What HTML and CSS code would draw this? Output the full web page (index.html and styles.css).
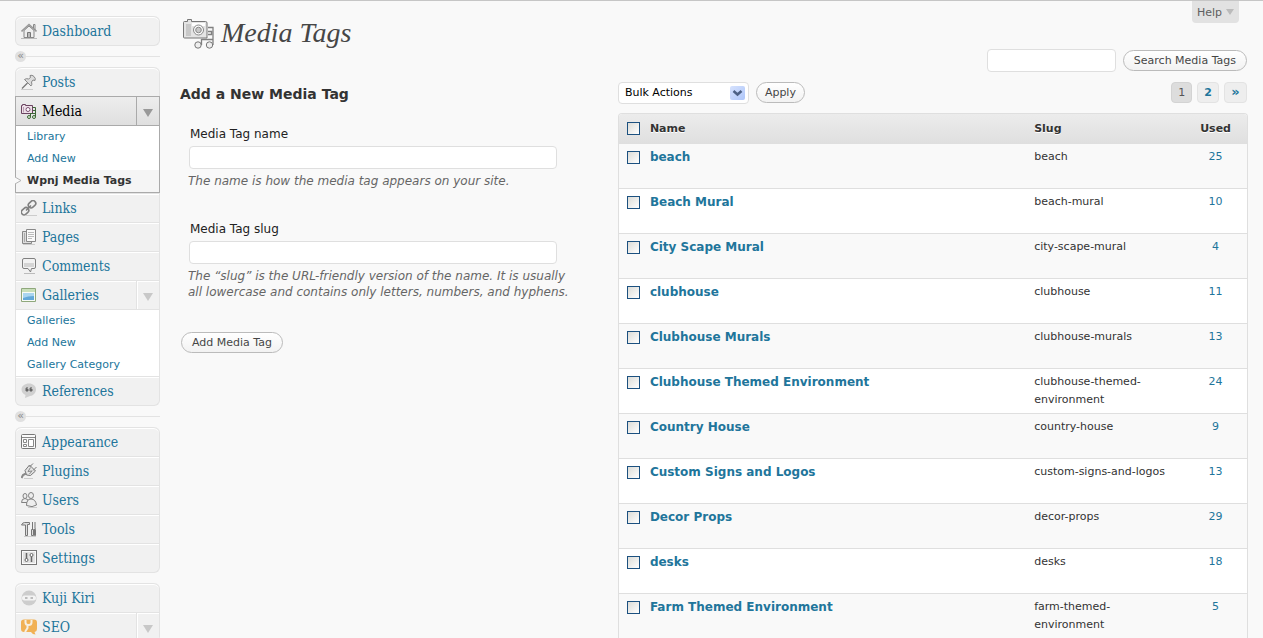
FILE: index.html
```html
<!DOCTYPE html>
<html lang="en">
<head>
<meta charset="utf-8">
<title>Media Tags</title>
<link rel="stylesheet" href="styles.css">
</head>
<body>
<div class="page">
  <nav class="sidebar" aria-label="Main menu">
    <ul class="group">
      <li><a class="item" href="#"><svg class="icon" viewBox="0 0 16 16"><path d="M3 7.500v7h10v-7L8 3z" fill="#eee" stroke="#888"/><path d="M.5 8.500 8 1.500l7.500 7" fill="none" stroke="#999" stroke-width="1.600"/><path d="M12.500 5V1.500h1.500V7" fill="none" stroke="#888"/><path d="M6.500 14V9.500h3V14" fill="#bbb" stroke="#777"/><path d="M0 15.500h16" stroke="#bbb"/></svg><span>Dashboard</span></a></li>
    </ul>
    <div class="sep"><span>«</span></div>
    <ul class="group">
      <li><a class="item" href="#"><svg class="icon" viewBox="0 0 16 16"><path d="M9 1.500q2-1 4 1t1 4l-2-.5-1.500 2q1 2.500-.5 4L3.500 5.500q2-1.500 4-.5l2-1.500z" fill="#dcdcdc" stroke="#888"/><path d="M6.500 9 1 14.500" stroke="#777" stroke-width="1.300" fill="none"/><path d="M0 15.500h12" stroke="#ccc"/></svg><span>Posts</span></a></li>
      <li>
        <div class="split current"><a class="item" href="#"><svg class="icon" viewBox="0 0 16 16"><path d="M.5 2.500h1v-1h3v1h7v8H.5z" fill="#eddfe8" stroke="#6b4461"/><path d="M2.500 4v5.500" stroke="#b89fb1"/><circle cx="7" cy="6.500" r="2" fill="#fff" stroke="#7b4f70"/><path d="M9.500 14v-4M14.500 14V4.500h-3M12 7.500h2.500M9.500 10.500h5" fill="none" stroke="#3d6636"/><circle cx="8" cy="14" r="1.500" fill="#dff0d8" stroke="#3d6636"/><circle cx="13" cy="14" r="1.500" fill="#dff0d8" stroke="#3d6636"/></svg><span>Media</span></a><button class="toggle" type="button" aria-label="Toggle Media"></button></div>
        <ul class="sub sub-current">
          <li><a href="#">Library</a></li>
          <li><a href="#">Add New</a></li>
          <li class="active"><svg class="notch" viewBox="0 0 8 12"><path d="M0 2 6 5.500 0 9" fill="#f9f9f9" stroke="#b4b4b4"/></svg><a href="#">Wpnj Media Tags</a></li>
        </ul>
      </li>
      <li><a class="item" href="#"><svg class="icon" viewBox="0 0 16 16"><g fill="none" stroke="#808080" stroke-width="1.600"><rect x="7" y="1.500" width="8" height="5.500" rx="2.700" transform="rotate(-42 11 4.200)"/><rect x="0" y="8.500" width="8" height="5.500" rx="2.700" transform="rotate(-42 4 11.200)"/><path d="M5 10.500 10 5.500"/></g><path d="M4 15.500h13" stroke="#ccc"/></svg><span>Links</span></a></li>
      <li><a class="item" href="#"><svg class="icon" viewBox="0 0 16 16"><path d="M1.500 2.500h9v12h-9z" fill="#ddd" stroke="#888"/><path d="M3.500 4v9" stroke="#aaa"/><path d="M5.500 .5h9v12h-9z" fill="#fafafa" stroke="#888"/><path d="M7 3.500h6M7 5.500h6M7 7.500h6M7 9.500h4" stroke="#bbb"/><path d="M2 15.500h12" stroke="#ccc"/></svg><span>Pages</span></a></li>
      <li><a class="item" href="#"><svg class="icon" viewBox="0 0 16 16"><path d="M3 .5h10q1.500 0 1.500 1.500v7q0 1.500-1.500 1.500h-2.500L9.500 14l-2.500-3.500H3Q1.500 10.500 1.500 9V2Q1.500 .5 3 .5z" fill="#f2f2f2" stroke="#808080"/><path d="M3 5h10v4H3z" fill="#d4d4d4"/><path d="M3 15.500h11" stroke="#bbb"/></svg><span>Comments</span></a></li>
      <li>
        <div class="split"><a class="item" href="#"><svg class="icon" viewBox="0 0 16 16"><path d="M.5 1.500h14v13H.5z" fill="#f8fbf6" stroke="#8fa87c"/><path d="M1 2h13v3H1z" fill="#c9dfba"/><path d="M2 6h11v7H2z" fill="#a9d5f0"/><path d="M2 11q5-2 11-2v4H2z" fill="#62a8d9"/></svg><span>Galleries</span></a><button class="toggle" type="button" aria-label="Toggle Galleries"></button></div>
        <ul class="sub">
          <li><a href="#">Galleries</a></li>
          <li><a href="#">Add New</a></li>
          <li><a href="#">Gallery Category</a></li>
        </ul>
      </li>
      <li><a class="item" href="#"><svg class="icon" viewBox="0 0 16 16"><path d="M8 .5c4 0 7 2.500 7 6s-3 6.500-6 6.500l-5 2 .5-3C2 11 .5 9 .5 6.500c0-3.500 3.500-6 7.500-6z" fill="#d0d0d0"/><path d="M6.500 4 5 5.500V8h2V6H6M10.500 4 9 5.500V8h2V6h-1" stroke="#666" fill="#666"/></svg><span>References</span></a></li>
    </ul>
    <div class="sep"><span>«</span></div>
    <ul class="group">
      <li><a class="item" href="#"><svg class="icon" viewBox="0 0 16 16"><rect x=".5" y=".5" width="14" height="14" rx="1" fill="#fafafa" stroke="#777"/><path d="M1 3.500h13" stroke="#888"/><path d="M2.500 5.500h3v3h-3zM2.500 10.500h3v2h-3zM7.500 5.500h5v7h-5z" fill="#fff" stroke="#888"/></svg><span>Appearance</span></a></li>
      <li><a class="item" href="#"><svg class="icon" viewBox="0 0 16 16"><path d="M4 7.500 8.500 2l6 6-5 4.500-4-.5zM8.500 4 12 .5M12 7.500 15.500 4" fill="#e4e4e4" stroke="#777"/><path d="M9.500 4.500 7 8.500l4-.5-2.500 3" fill="none" stroke="#888"/><path d="M5 10.500 2 12l-1.500 3" fill="none" stroke="#888" stroke-width="2"/><path d="M3 15.500h9" stroke="#ccc"/></svg><span>Plugins</span></a></li>
      <li><a class="item" href="#"><svg class="icon" viewBox="0 0 16 16"><g fill="#eee" stroke="#808080"><ellipse cx="4" cy="4" rx="2" ry="2.500"/><path d="M.5 10.500q0-4 3.500-4t3.500 4z"/><ellipse cx="10" cy="3.500" rx="2.500" ry="3"/><path d="M5.500 13.500Q5.500 7 10 7t5.500 6q-4 3-10 .5z"/></g><path d="M7 15.500h9" stroke="#ccc"/></svg><span>Users</span></a></li>
      <li><a class="item" href="#"><svg class="icon" viewBox="0 0 16 16"><path d="M.5 4q1-2.500 3-2.500h5v2H6.500v11h-2V4z" fill="#ddd" stroke="#777"/><path d="M10.500 14.500V8.500h2v6zM11.500 8V1M14 1v6q.5 1 .5 3v4.500h-1V8" fill="#ddd" stroke="#777"/><path d="M3 15.500h12" stroke="#ccc"/></svg><span>Tools</span></a></li>
      <li><a class="item" href="#"><svg class="icon" viewBox="0 0 16 16"><rect x=".5" y=".5" width="15" height="14" fill="#fafafa" stroke="#777"/><rect x="2" y="2" width="12" height="11" fill="#e2e2e2"/><path d="M5.500 3v6M10.500 12V6" stroke="#666" stroke-width="1.500"/><circle cx="5.500" cy="10" r="1.500" fill="#fff" stroke="#666"/><circle cx="10.500" cy="5" r="1.500" fill="#fff" stroke="#666"/></svg><span>Settings</span></a></li>
    </ul>
    <ul class="group spaced">
      <li><a class="item" href="#"><svg class="icon" viewBox="0 0 16 16"><circle cx="8" cy="8" r="7.500" fill="#cdcdcd"/><rect x="1" y="5.500" width="14" height="5" rx="2.500" fill="#f3f3f3"/><path d="M4 8h2.500M9.500 8H12" stroke="#aaa" stroke-width="1.500"/></svg><span>Kuji Kiri</span></a></li>
      <li><div class="split"><a class="item" href="#"><svg class="icon" viewBox="0 0 16 16"><path d="M3 .5h10q3 0 3 3v6q0 3-2.500 3.500l1 2.500q-3 0-4.500-2.500H3q-3 0-3-3v-7q0-2.500 3-2.500z" fill="#f1b155"/><path d="M4.500 1v2.500Q4.500 6 7.500 6t3-2.500V1M6.500 6v3L4 13" fill="none" stroke="#f6efe2" stroke-width="2"/></svg><span>SEO</span></a><button class="toggle" type="button" aria-label="Toggle SEO"></button></div></li>
    </ul>
  </nav>

  <main class="main">
    <header class="top">
      <h1><svg class="title-icon" viewBox="0 0 32 32"><path d="M1.500 5.500q0-1 1-1h3v-2h4v2h14q1.500 0 1.500 1.500v15H2.500q-1 0-1-1z" fill="#e4e4e4" stroke="#777"/><path d="M4 7h5v12H4z" fill="#c8c8c8"/><path d="M10 6h13v3H10z" fill="#fff"/><path d="M19.500 28v-6M26 10.500h5V28M26 14.500h3.500v3H26M19.500 22.500H31" fill="none" stroke="#808080" stroke-width="1.300"/><circle cx="16.500" cy="13" r="5" fill="#fafafa" stroke="#888"/><circle cx="16.500" cy="13" r="2.800" fill="#c8c8c8" stroke="#888"/><circle cx="16" cy="28" r="3.200" fill="#eee" stroke="#777"/><circle cx="27.500" cy="28" r="3.200" fill="#eee" stroke="#777"/></svg><span>Media Tags</span></h1>
      <button class="help" type="button">Help<i></i></button>
    </header>
    <form class="search">
      <input class="field" type="text" aria-label="Search Media Tags">
      <button class="pill wide" type="button">Search Media Tags</button>
    </form>
    <div class="columns">
      <form class="add">
        <h2>Add a New Media Tag</h2>
        <div class="form-field">
          <label for="tag-name">Media Tag name</label>
          <input class="field" id="tag-name" type="text">
          <p>The name is how the media tag appears on your site.</p>
        </div>
        <div class="form-field">
          <label for="tag-slug">Media Tag slug</label>
          <input class="field" id="tag-slug" type="text">
          <p>The “slug” is the URL-friendly version of the name. It is usually all lowercase and contains only letters, numbers, and hyphens.</p>
        </div>
        <button class="pill wide" type="button">Add Media Tag</button>
      </form>
      <section class="list">
        <div class="actions">
          <div class="select"><select aria-label="Bulk Actions"><option>Bulk Actions</option></select><svg viewBox="0 0 15 14"><path d="M3.500 5 7.500 8.500 11.500 5" fill="none" stroke="#4d6185" stroke-width="2.500"/></svg></div>
          <button class="pill" type="button">Apply</button>
          <div class="pager"><span class="here">1</span><a href="#">2</a><a class="next" href="#">»</a></div>
        </div>
        <table>
          <colgroup><col class="c-check"><col><col class="c-slug"><col class="c-used"></colgroup>
          <thead><tr><th><input type="checkbox" aria-label="Select all"></th><th>Name</th><th>Slug</th><th class="num">Used</th></tr></thead>
          <tbody>
            <tr><td><input type="checkbox" aria-label="beach"></td><td><a class="name" href="#">beach</a></td><td>beach</td><td class="num"><a href="#">25</a></td></tr>
            <tr><td><input type="checkbox" aria-label="Beach Mural"></td><td><a class="name" href="#">Beach Mural</a></td><td>beach-mural</td><td class="num"><a href="#">10</a></td></tr>
            <tr><td><input type="checkbox" aria-label="City Scape Mural"></td><td><a class="name" href="#">City Scape Mural</a></td><td>city-scape-mural</td><td class="num"><a href="#">4</a></td></tr>
            <tr><td><input type="checkbox" aria-label="clubhouse"></td><td><a class="name" href="#">clubhouse</a></td><td>clubhouse</td><td class="num"><a href="#">11</a></td></tr>
            <tr><td><input type="checkbox" aria-label="Clubhouse Murals"></td><td><a class="name" href="#">Clubhouse Murals</a></td><td>clubhouse-murals</td><td class="num"><a href="#">13</a></td></tr>
            <tr><td><input type="checkbox" aria-label="Clubhouse Themed Environment"></td><td><a class="name" href="#">Clubhouse Themed Environment</a></td><td>clubhouse-themed-environment</td><td class="num"><a href="#">24</a></td></tr>
            <tr><td><input type="checkbox" aria-label="Country House"></td><td><a class="name" href="#">Country House</a></td><td>country-house</td><td class="num"><a href="#">9</a></td></tr>
            <tr><td><input type="checkbox" aria-label="Custom Signs and Logos"></td><td><a class="name" href="#">Custom Signs and Logos</a></td><td>custom-signs-and-logos</td><td class="num"><a href="#">13</a></td></tr>
            <tr><td><input type="checkbox" aria-label="Decor Props"></td><td><a class="name" href="#">Decor Props</a></td><td>decor-props</td><td class="num"><a href="#">29</a></td></tr>
            <tr><td><input type="checkbox" aria-label="desks"></td><td><a class="name" href="#">desks</a></td><td>desks</td><td class="num"><a href="#">18</a></td></tr>
            <tr><td><input type="checkbox" aria-label="Farm Themed Environment"></td><td><a class="name" href="#">Farm Themed Environment</a></td><td>farm-themed-environment</td><td class="num"><a href="#">5</a></td></tr>
          </tbody>
        </table>
      </section>
    </div>
  </main>
</div>
</body>
</html>
```
FILE: styles.css
```css
* { box-sizing: border-box; }
html { scrollbar-width: none; background: #f9f9f9; }
body {
  margin: 0;
  border-top: 1px solid #c6c6c6;
  color: #333;
  font: 11px/18px "DejaVu Sans", Verdana, sans-serif;
}
a { color: #21759b; text-decoration: none; }
ul { list-style: none; margin: 0; padding: 0; }
h1, h2, p { margin: 0; font-weight: normal; }
button, input, select { font-family: inherit; margin: 0; }

.page { display: flex; gap: 20px; padding: 0 15px; }

/* Sidebar */
.sidebar { flex: none; width: 145px; padding-top: 15px; }
.group {
  border: 1px solid #e3e3e3;
  border-top: 0;
  border-radius: 6px;
  background: #f1f1f1;
}
.group > li:first-child .item { border-radius: 6px 6px 0 0; }
.spaced { margin-top: 10px; }
.item {
  display: flex;
  align-items: center;
  gap: 5px;
  flex: 1;
  height: 29px;
  padding-left: 5px;
  border-top: 1px solid #e3e3e3;
  box-shadow: inset 0 1px #fff;
  font: 14px/28px "DejaVu Serif Condensed", "DejaVu Serif", Georgia, serif;
}
.icon { width: 16px; height: 16px; flex: none; }
.split { display: flex; }
.toggle {
  width: 23px;
  height: 29px;
  padding: 4px 0 0;
  border: 0;
  border-top: 1px solid #e3e3e3;
  border-left: 1px solid #e3e3e3;
  background: #f1f1f1;
  box-shadow: inset 1px 1px #fff;
}
.toggle::before {
  content: "";
  display: block;
  width: 0;
  margin: 0 auto;
  border: 5px solid transparent;
  border-top: 8px solid #c8c8c8;
  border-bottom: 0;
}
.current { margin: 0 -1px; border: 1px solid #aaa; border-width: 0 1px; }
.current .item, .current .toggle {
  border-color: #aaa;
  background: linear-gradient(#ededed, #dfdfdf);
  box-shadow: none;
  color: #000;
}
.current .toggle::before { border-top-color: #999; }
.sub { background: #fff; border-top: 1px solid #e3e3e3; }
.sub li { height: 22px; padding-left: 11px; line-height: 22px; }
.sub-current { margin: 0 -1px; border: 1px solid #aaa; }
.sub .active { position: relative; background: #f5f5f5; }
.active a { color: #333; font-weight: bold; }
.notch { position: absolute; left: -1px; top: 5px; width: 8px; height: 12px; }
.sep { display: flex; align-items: center; height: 21px; }
.sep::after { content: ""; flex: 1; border-top: 1px solid #e3e3e3; }
.sep span {
  width: 11px;
  height: 11px;
  border-radius: 50%;
  background: #e0e0e0;
  color: #888;
  font-size: 11px;
  line-height: 9px;
  text-align: center;
}

/* Page heading */
.main { flex: 1; min-width: 0; }
.top { display: flex; justify-content: space-between; align-items: flex-start; height: 48px; }
h1 {
  display: flex;
  gap: 7px;
  padding: 16px 0 0 2px;
  color: #464646;
  font: italic 28px/32px "Liberation Serif", Georgia, serif;
}
.title-icon { width: 32px; height: 32px; }
.help {
  display: flex;
  align-items: center;
  gap: 4px;
  height: 22px;
  margin-right: 9px;
  padding: 0 5px;
  border: 0;
  border-radius: 0 0 4px 4px;
  background: #e2e2e2;
  color: #606060;
  font-size: 11px;
}
.help i { border: 4px solid transparent; border-top: 6px solid #bbb; border-bottom: 0; }

/* Controls */
.field {
  display: block;
  height: 23px;
  padding: 0 4px;
  border: 1px solid #dfdfdf;
  border-radius: 4px;
  background: #fff;
  font-size: 12px;
}
.pill {
  height: 21px;
  padding: 0 8px;
  border: 1px solid #bbb;
  border-radius: 11px;
  background: linear-gradient(#fff, #f2f2f2);
  color: #464646;
  font-size: 11px;
  line-height: 18px;
  white-space: nowrap;
}
.wide { padding: 0 10px; }
.search { display: flex; justify-content: flex-end; align-items: center; gap: 7px; padding-right: 1px; }
.search .field { width: 129px; }
.columns { display: grid; grid-template-columns: 41fr 59fr; padding-top: 9px; }

/* Add form */
.add { padding-right: 46px; }
h2 { padding-top: 3px; font-size: 14px; font-weight: bold; line-height: 20px; }
.form-field { padding: 20px 0 0 8px; margin-bottom: 10px; }
.form-field label { display: block; padding-left: 2px; color: #222; font-size: 12px; line-height: 20px; margin-bottom: 2px; }
.form-field .field { width: calc(100% - 16px); margin-left: 1px; }
.form-field p { color: #666; font-size: 12px; font-style: italic; line-height: 16px; padding-top: 4px; }
.add .pill { margin: 22px 0 0 1px; }

/* Tag list */
.actions { display: flex; align-items: center; gap: 7px; height: 23px; margin-bottom: 9px; }
.select { position: relative; width: 131px; }
.select select {
  width: 100%;
  height: 22px;
  padding: 0 6px;
  border: 1px solid #dfdfdf;
  border-radius: 4px;
  background: #fff;
  color: #000;
  font-size: 11px;
  appearance: none;
}
.select svg {
  position: absolute;
  right: 4px;
  top: 4px;
  width: 15px;
  height: 14px;
  border-radius: 2px;
  background: linear-gradient(135deg, #d6e2fd, #aec6fa);
  pointer-events: none;
}
.pager { display: flex; gap: 5px; margin-left: auto; padding-right: 1px; }
.pager > * {
  min-width: 21px;
  height: 21px;
  padding: 0 6px;
  border: 1px solid #e3e3e3;
  border-radius: 4px;
  background: #eee;
  font-size: 11px;
  font-weight: bold;
  line-height: 19px;
  text-align: center;
}
.pager .here { background: #ddd; border-color: #d3d3d3; color: #555; font-weight: normal; }
.pager .next { min-width: 23px; font-size: 13px; line-height: 18px; }
table {
  width: 100%;
  table-layout: fixed;
  border: 1px solid #dfdfdf;
  border-bottom: 0;
  border-radius: 4px 4px 0 0;
  border-spacing: 0;
  background: #fff;
}
.c-check { width: 24px; }
.c-slug { width: 25%; }
.c-used { width: 10%; }
th, td { padding: 0 7px; text-align: left; vertical-align: top; }
th {
  height: 30px;
  background: linear-gradient(#ececec, #dfdfdf);
  line-height: 29px;
  text-shadow: 0 1px #fff;
}
th:first-child { border-top-left-radius: 3px; }
th:last-child { border-top-right-radius: 3px; }
td { height: 45px; padding-top: 4px; border-bottom: 1px solid #dfdfdf; }
tbody tr:nth-child(odd) { background: #f9f9f9; }
.num { padding: 0; text-align: center; }
td.num { padding-top: 4px; }
.name { font-size: 12px; font-weight: bold; }
table input {
  display: block;
  appearance: none;
  width: 13px;
  height: 13px;
  margin: 3px 0 0 1px;
  border: 1px solid #1c5180;
  background: linear-gradient(135deg, #dcdcd7, #fff);
}
th input { margin-top: 8px; }
```
